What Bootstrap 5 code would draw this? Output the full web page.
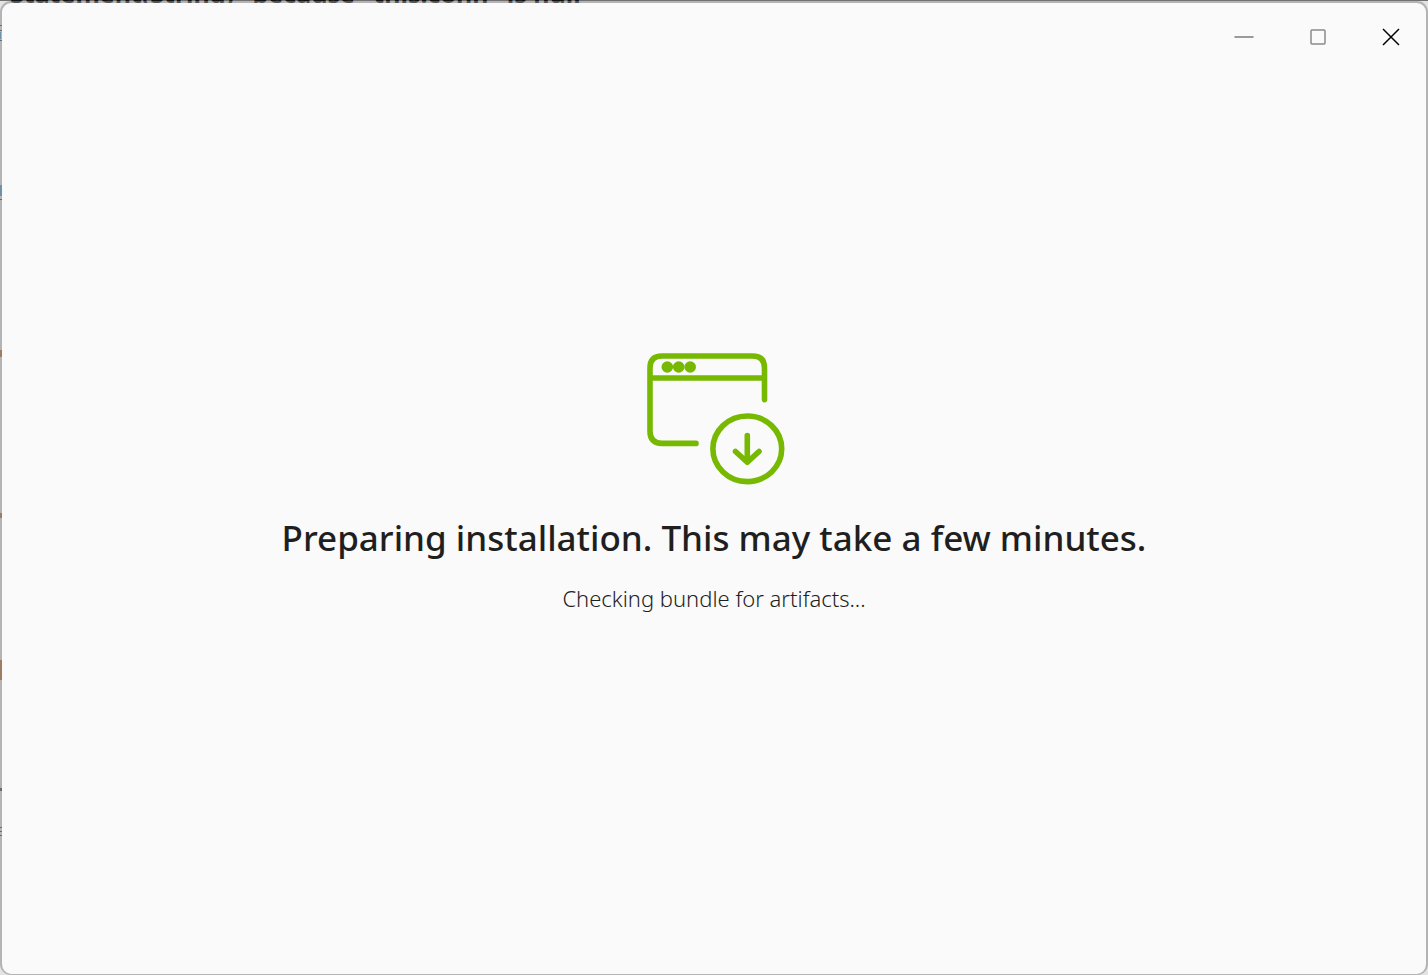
<!DOCTYPE html>
<html lang="en">
<head>
<meta charset="utf-8">
<meta name="viewport" content="width=device-width, initial-scale=1">
<title>Preparing installation</title>
<link href="https://cdn.jsdelivr.net/npm/bootstrap@5.3.0/dist/css/bootstrap.min.css" rel="stylesheet">
<style>
  body { background: #e4e4e4; color: #1f1f1f; font-family: "Noto Sans", sans-serif; }
  /* page that the installer window lies over */
  .backdrop-line { top: 0; left: 0; height: 3px; color: #111; }
  .backdrop-line::before { content: ""; position: absolute; inset: 0 0 auto 0; height: 1px; background: #707070; }
  .backdrop-line span { position: absolute; left: 10px; bottom: -7px; font-size: 25px; line-height: 34px; font-weight: 700; white-space: pre; }
  .backdrop-edge { top: 0; left: 0; }
  .installer { margin-top: 1px; min-height: calc(100vh - 1px); background: #fafafa; background-clip: padding-box; border: 2px solid rgba(140, 140, 140, .55); border-bottom-width: 1px; border-radius: 11px; }
  .caption-btn { width: 74px; height: 68px; color: #8a8a8a; }
  .caption-btn.close-btn { width: 71px; color: #000; }
  .installer main { padding-bottom: 80px; }
  .installer main svg { margin-bottom: 28px; }
  .installer h1 { font-size: 35px; line-height: 48px; font-weight: 500; margin-bottom: 20px; }
  .installer p { font-size: 22px; line-height: 32px; font-weight: 300; }
</style>
</head>
<body>
<div class="backdrop-line position-absolute w-100 overflow-hidden" aria-hidden="true"><span>Statement(String)" because "this.conn" is null</span></div>
<svg class="backdrop-edge position-absolute" width="2" height="850" viewBox="0 0 2 850" aria-hidden="true">
  <path fill="#444" d="M0 25h2v1H0zM0 30h2v1H0zM0 40h2v1H0zM0 199h2v1H0zM0 788h2v3H0zM0 827h2v1H0zM0 831h2v1H0zM0 835h2v1H0z"/>
  <path fill="#4a9ac8" d="M0 32h1v7H0zM0 185h2v11H0z"/>
  <path fill="#b06a30" d="M0 350h2v7H0zM0 513h2v5H0zM0 660h2v20H0z"/>
</svg>
<div class="installer position-relative d-flex flex-column overflow-hidden">
  <header class="d-flex justify-content-end">
    <button type="button" class="caption-btn btn border-0 rounded-0 p-0 d-flex align-items-center justify-content-center" aria-label="Minimize">
      <svg width="20" height="20" viewBox="0 0 20 20"><path d="M.5 10H19.500" stroke="#9a9a9a" stroke-width="2"/></svg>
    </button>
    <button type="button" class="caption-btn btn border-0 rounded-0 p-0 d-flex align-items-center justify-content-center" aria-label="Maximize">
      <svg width="20" height="20" viewBox="0 0 20 20" fill="none"><rect x="3" y="3" width="14" height="14" rx="1" stroke="currentColor" stroke-width="1.500"/></svg>
    </button>
    <button type="button" class="caption-btn close-btn btn border-0 rounded-0 p-0 d-flex align-items-center justify-content-center" aria-label="Close">
      <svg width="21" height="20" viewBox="0 0 21 20"><path d="M3 2L19 18M19 2L3 18" stroke="currentColor" stroke-width="1.500"/></svg>
    </button>
  </header>
  <main class="flex-grow-1 d-flex flex-column align-items-center justify-content-center text-center">
    <svg width="142" height="134" viewBox="-4 0 142 134" fill="none" stroke="#76b900" stroke-width="5.600" stroke-linecap="round" stroke-linejoin="round" aria-hidden="true">
      <path d="M117.500 47.600V16Q117.500 4 105.500 4H15Q3 4 3 16V79Q3 91.400 15 91.400H49M3 26H117.500"/>
      <g fill="#76b900" stroke="none"><circle cx="20.300" cy="15" r="5.800"/><circle cx="31.700" cy="15" r="5.800"/><circle cx="43.200" cy="15" r="5.800"/></g>
      <ellipse cx="100.300" cy="96.800" rx="34.400" ry="32.800"/>
      <path d="M100.300 83.500V110M88.500 99.500L100.300 110.200L112 99.500"/>
    </svg>
    <h1>Preparing installation. This may take a few minutes.</h1>
    <p class="mb-0">Checking bundle for artifacts...</p>
  </main>
</div>
<script src="https://cdn.jsdelivr.net/npm/bootstrap@5.3.0/dist/js/bootstrap.bundle.min.js"></script>
</body>
</html>
